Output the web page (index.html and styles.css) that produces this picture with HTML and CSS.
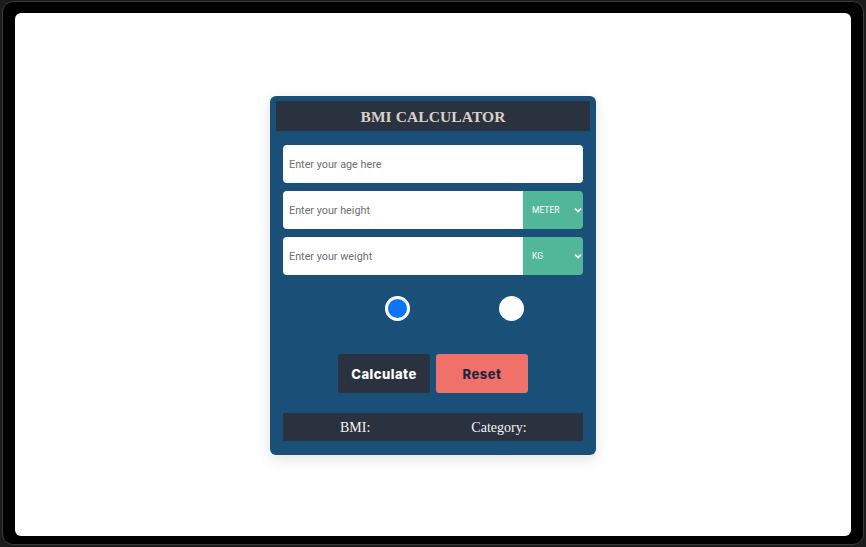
FILE: index.html
```html
<!DOCTYPE html>
<html lang="en">
<head>
<meta charset="utf-8">
<title>BMI Calculator</title>
<link rel="stylesheet" href="styles.css">
</head>
<body>
<div class="frame">
  <div class="screen">
    <div class="card">
      <h1 class="title">BMI CALCULATOR</h1>
      <div class="form">
        <input class="field full" type="text" placeholder="Enter your age here">
        <div class="row">
          <input class="field" type="text" placeholder="Enter your height">
          <div class="unit">
            <select class="unit-select"><option>METER</option><option>CM</option><option>FEET</option></select>
            <svg class="chev" width="8" height="6" viewBox="0 0 8 6"><path d="M1 1.5 L4 4.5 L7 1.5" fill="none" stroke="#fff" stroke-width="1.6"/></svg>
          </div>
        </div>
        <div class="row">
          <input class="field" type="text" placeholder="Enter your weight">
          <div class="unit">
            <select class="unit-select"><option>KG</option><option>LB</option></select>
            <svg class="chev" width="8" height="6" viewBox="0 0 8 6"><path d="M1 1.5 L4 4.5 L7 1.5" fill="none" stroke="#fff" stroke-width="1.6"/></svg>
          </div>
        </div>
        <div class="radios">
          <input class="radio r1" type="radio" name="gender" checked>
          <input class="radio r2" type="radio" name="gender">
        </div>
        <div class="buttons">
          <button class="btn calc">Calculate</button>
          <button class="btn reset">Reset</button>
        </div>
        <div class="result">
          <span>BMI:</span>
          <span>Category:</span>
        </div>
      </div>
    </div>
  </div>
</div>
</body>
</html>
```
FILE: styles.css
```css
* { box-sizing: border-box; }
html, body { margin: 0; padding: 0; }
body {
  background: #1b1b1b;
  width: 866px;
  height: 547px;
  padding: 1px 2px 2px 2px;
}
.frame {
  height: 544px;
  background: #000;
  border: 1px solid #3a3a3a;
  border-radius: 11px;
  padding: 11px 12px 8px 12px;
}
.screen {
  height: 523px;
  background: #fff;
  border-radius: 6px;
  padding-top: 83px;
}
.card {
  width: 326px;
  margin-left: 255px;
  background: #1a4f78;
  border-radius: 6px;
  padding: 5px 6px 14px 6px;
  box-shadow: 0 4px 14px rgba(0,0,0,0.12);
}
.title {
  margin: 0;
  height: 30px;
  background: #2a3240;
  color: #d9d0c6;
  font-family: "Liberation Serif", serif;
  font-weight: 700;
  font-size: 15.5px;
  line-height: 31px;
  text-align: center;
  letter-spacing: 0.1px;
}
.form {
  padding: 14px 7px 0 7px;
}
.field {
  display: block;
  height: 38px;
  border: none;
  border-radius: 4px;
  background: #fff;
  padding: 0 6px;
  font-family: Roboto, sans-serif;
  font-size: 10.8px;
  color: #333;
  outline: none;
}
.field::placeholder { color: #6f6f6f; }
.full { width: 300px; margin-bottom: 8px; }
.row {
  display: flex;
  width: 300px;
  height: 38px;
  margin-bottom: 8px;
}
.row .field {
  width: 240px;
  border-radius: 4px 0 0 4px;
}
.unit {
  position: relative;
  width: 60px;
  height: 38px;
  background: #52b798;
  border-radius: 0 4px 4px 0;
}
.unit-select {
  appearance: none;
  -webkit-appearance: none;
  width: 100%;
  height: 100%;
  border: none;
  background: transparent;
  color: #fff;
  font-family: Roboto, sans-serif;
  font-size: 8.5px;
  padding: 0 0 0 9px;
  outline: none;
}
.chev {
  position: absolute;
  right: 1px;
  top: 16px;
  pointer-events: none;
}
.radios {
  display: flex;
  height: 62px;
  padding-top: 13px;
  padding-left: 102px;
}
.radio {
  appearance: none;
  -webkit-appearance: none;
  margin: 0;
  width: 25px;
  height: 25px;
  border-radius: 50%;
  background: #fff;
  border: none;
}
.radio.r1 {
  background: #0b74f7;
  box-shadow: inset 0 0 0 3px #fff;
}
.radio.r2 { margin-left: 89px; }
.buttons {
  display: flex;
  justify-content: center;
  gap: 6px;
  height: 39px;
  margin-top: 9px;
}
.btn {
  width: 92px;
  height: 39px;
  border: none;
  border-radius: 3px;
  font-family: Inter, sans-serif;
  font-weight: 800;
  font-size: 13px;
  letter-spacing: 0.5px;
}
.calc { background: #2a3240; color: #fff; }
.reset { background: #f0706a; color: #1f2640; }
.result {
  display: flex;
  gap: 101px;
  margin-top: 20px;
  height: 28px;
  width: 300px;
  background: #2a3240;
  color: #f4f4f4;
  font-family: "Liberation Serif", serif;
  font-size: 14px;
  line-height: 30px;
  padding: 0 0 0 57px;
}
```
